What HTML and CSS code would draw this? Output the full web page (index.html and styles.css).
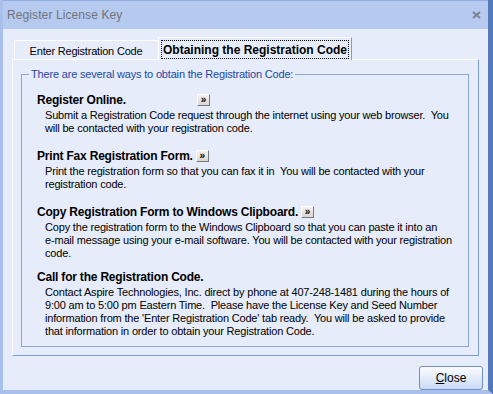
FILE: index.html
```html
<!DOCTYPE html>
<html lang="en">
<head>
  <meta charset="UTF-8">
  <title>Register License Key</title>
  <link rel="stylesheet" href="styles.css">
</head>
<body>
  <div class="window">
    <div class="titlebar">
      <span class="title">Register License Key</span>
      <svg class="x-icon" width="9" height="8" viewBox="0 0 9 8">
        <path d="M1 1l7 6M8 1l-7 6" stroke="#7b838f" stroke-width="2"/>
      </svg>
    </div>
    <div class="client">
      <div class="tabs">
        <div class="tab">Enter Registration Code</div>
        <div class="tab active"><span class="focus">Obtaining the Registration Code</span></div>
      </div>
      <div class="page">
        <fieldset class="group">
          <legend>There are several ways to obtain the Registration Code:</legend>

          <div class="item">
            <div class="head"><span class="head-text wide">Register Online.</span><span class="go">&raquo;</span></div>
            <p class="desc">Submit a Registration Code request through the internet using your web browser.&nbsp; You<br>will be contacted with your registration code.</p>
          </div>

          <div class="item">
            <div class="head"><span class="head-text">Print Fax Registration Form.</span><span class="go">&raquo;</span></div>
            <p class="desc">Print the registration form so that you can fax it in&nbsp; You will be contacted with your<br>registration code.</p>
          </div>

          <div class="item">
            <div class="head"><span class="head-text">Copy Registration Form to Windows Clipboard.</span><span class="go">&raquo;</span></div>
            <p class="desc">Copy the registration form to the Windows Clipboard so that you can paste it into an<br>e-mail message using your e-mail software. You will be contacted with your registration<br>code.</p>
          </div>

          <div class="item last">
            <div class="head"><span class="head-text">Call for the Registration Code.</span></div>
            <p class="desc">Contact Aspire Technologies, Inc. direct by phone at 407-248-1481 during the hours of<br>9:00 am to 5:00 pm Eastern Time.&nbsp; Please have the License Key and Seed Number<br>information from the 'Enter Registration Code' tab ready.&nbsp; You will be asked to provide<br>that information in order to obtain your Registration Code.</p>
          </div>
        </fieldset>
      </div>
      <div class="footer">
        <button class="btn" type="button"><u>C</u>lose</button>
      </div>
    </div>
  </div>
</body>
</html>
```

FILE: styles.css
```css
* {
  box-sizing: border-box;
}
body {
  margin: 0;
  font-family: "Liberation Sans", Tahoma, Arial, sans-serif;
  font-size: 11px;
  color: #000;
}
.window {
  width: 493px;
  height: 394px;
  display: flex;
  flex-direction: column;
  background: #e6ecfa;
  border-left: 3px solid #a9c0ec;
  border-right: 5px solid #5479bb;
  border-bottom: 4px solid #a9c0ec;
}
/* title bar */
.titlebar {
  height: 29px;
  display: flex;
  align-items: center;
  justify-content: space-between;
  padding: 0 7px 0 4px;
  background: #b6caef;
  border-top: 1px solid #8faade;
}
.title {
  font-size: 12px;
  letter-spacing: 0.1px;
  color: #6f737c;
}
/* client area */
.client {
  flex: 1;
  display: flex;
  flex-direction: column;
  padding: 8px 5px 0 9px;
}
.tabs {
  display: flex;
  align-items: flex-end;
  height: 22px;
  margin-left: 2px;
}
.tab {
  height: 19px;
  width: 144px;
  padding-top: 4px;
  text-align: center;
  font-size: 11px;
  letter-spacing: -0.2px;
  background: #e6ecfa;
  border: 1px solid #fff;
  border-bottom: none;
  border-right-color: #f4efe6;
}
.tab.active {
  position: relative;
  z-index: 1;
  height: 23px;
  width: 194px;
  margin-bottom: -1px;
  padding: 2px 2px 0;
  font-size: 12px;
  font-weight: bold;
  letter-spacing: 0;
  border-right-color: #7b9cd6;
}
.focus {
  display: block;
  height: 19px;
  padding-top: 2px;
  border: 1px dotted #000;
}
.page {
  height: 297px;
  margin-right: 4px;
  padding: 8px 9px 0 8px;
  border: 1px solid;
  border-color: #fff #7b9cd6 #7b9cd6 #fff;
}
.group {
  height: 279px;
  margin: 0;
  padding: 9px 0 0;
  border: 1px solid #89a7dc;
}
.group legend {
  margin-left: 7px;
  padding: 0 2px;
  line-height: 13px;
  letter-spacing: -0.18px;
  color: #1d48a6;
}
.item {
  margin: 0 0 0 15px;
}
.item + .item {
  margin-top: 11px;
}
.item.last {
  margin-top: 7px;
}
.head {
  display: flex;
  align-items: center;
  height: 19px;
  font-size: 12px;
  font-weight: bold;
  letter-spacing: -0.2px;
}
.head-text.wide {
  min-width: 157px;
}
.go {
  width: 13px;
  height: 12px;
  margin-left: 3px;
  font-size: 10px;
  line-height: 10px;
  letter-spacing: 0;
  text-align: center;
  color: #000;
  background: linear-gradient(#f4f4f2, #d8d6cf);
  border: 1px solid;
  border-color: #fff #7a7a7a #7a7a7a #fff;
}
.desc {
  margin: 0 0 0 8px;
  line-height: 13px;
  letter-spacing: -0.18px;
  white-space: nowrap;
}
/* footer */
.footer {
  display: flex;
  justify-content: flex-end;
  padding-top: 10px;
}
.btn {
  width: 64px;
  height: 24px;
  padding: 0;
  font-family: inherit;
  font-size: 12px;
  color: #000;
  border: 1px solid #6f8fc6;
  border-radius: 3px;
  background: linear-gradient(#fbfdff 0%, #e3ecfb 50%, #c9d9f4 100%);
}
```
